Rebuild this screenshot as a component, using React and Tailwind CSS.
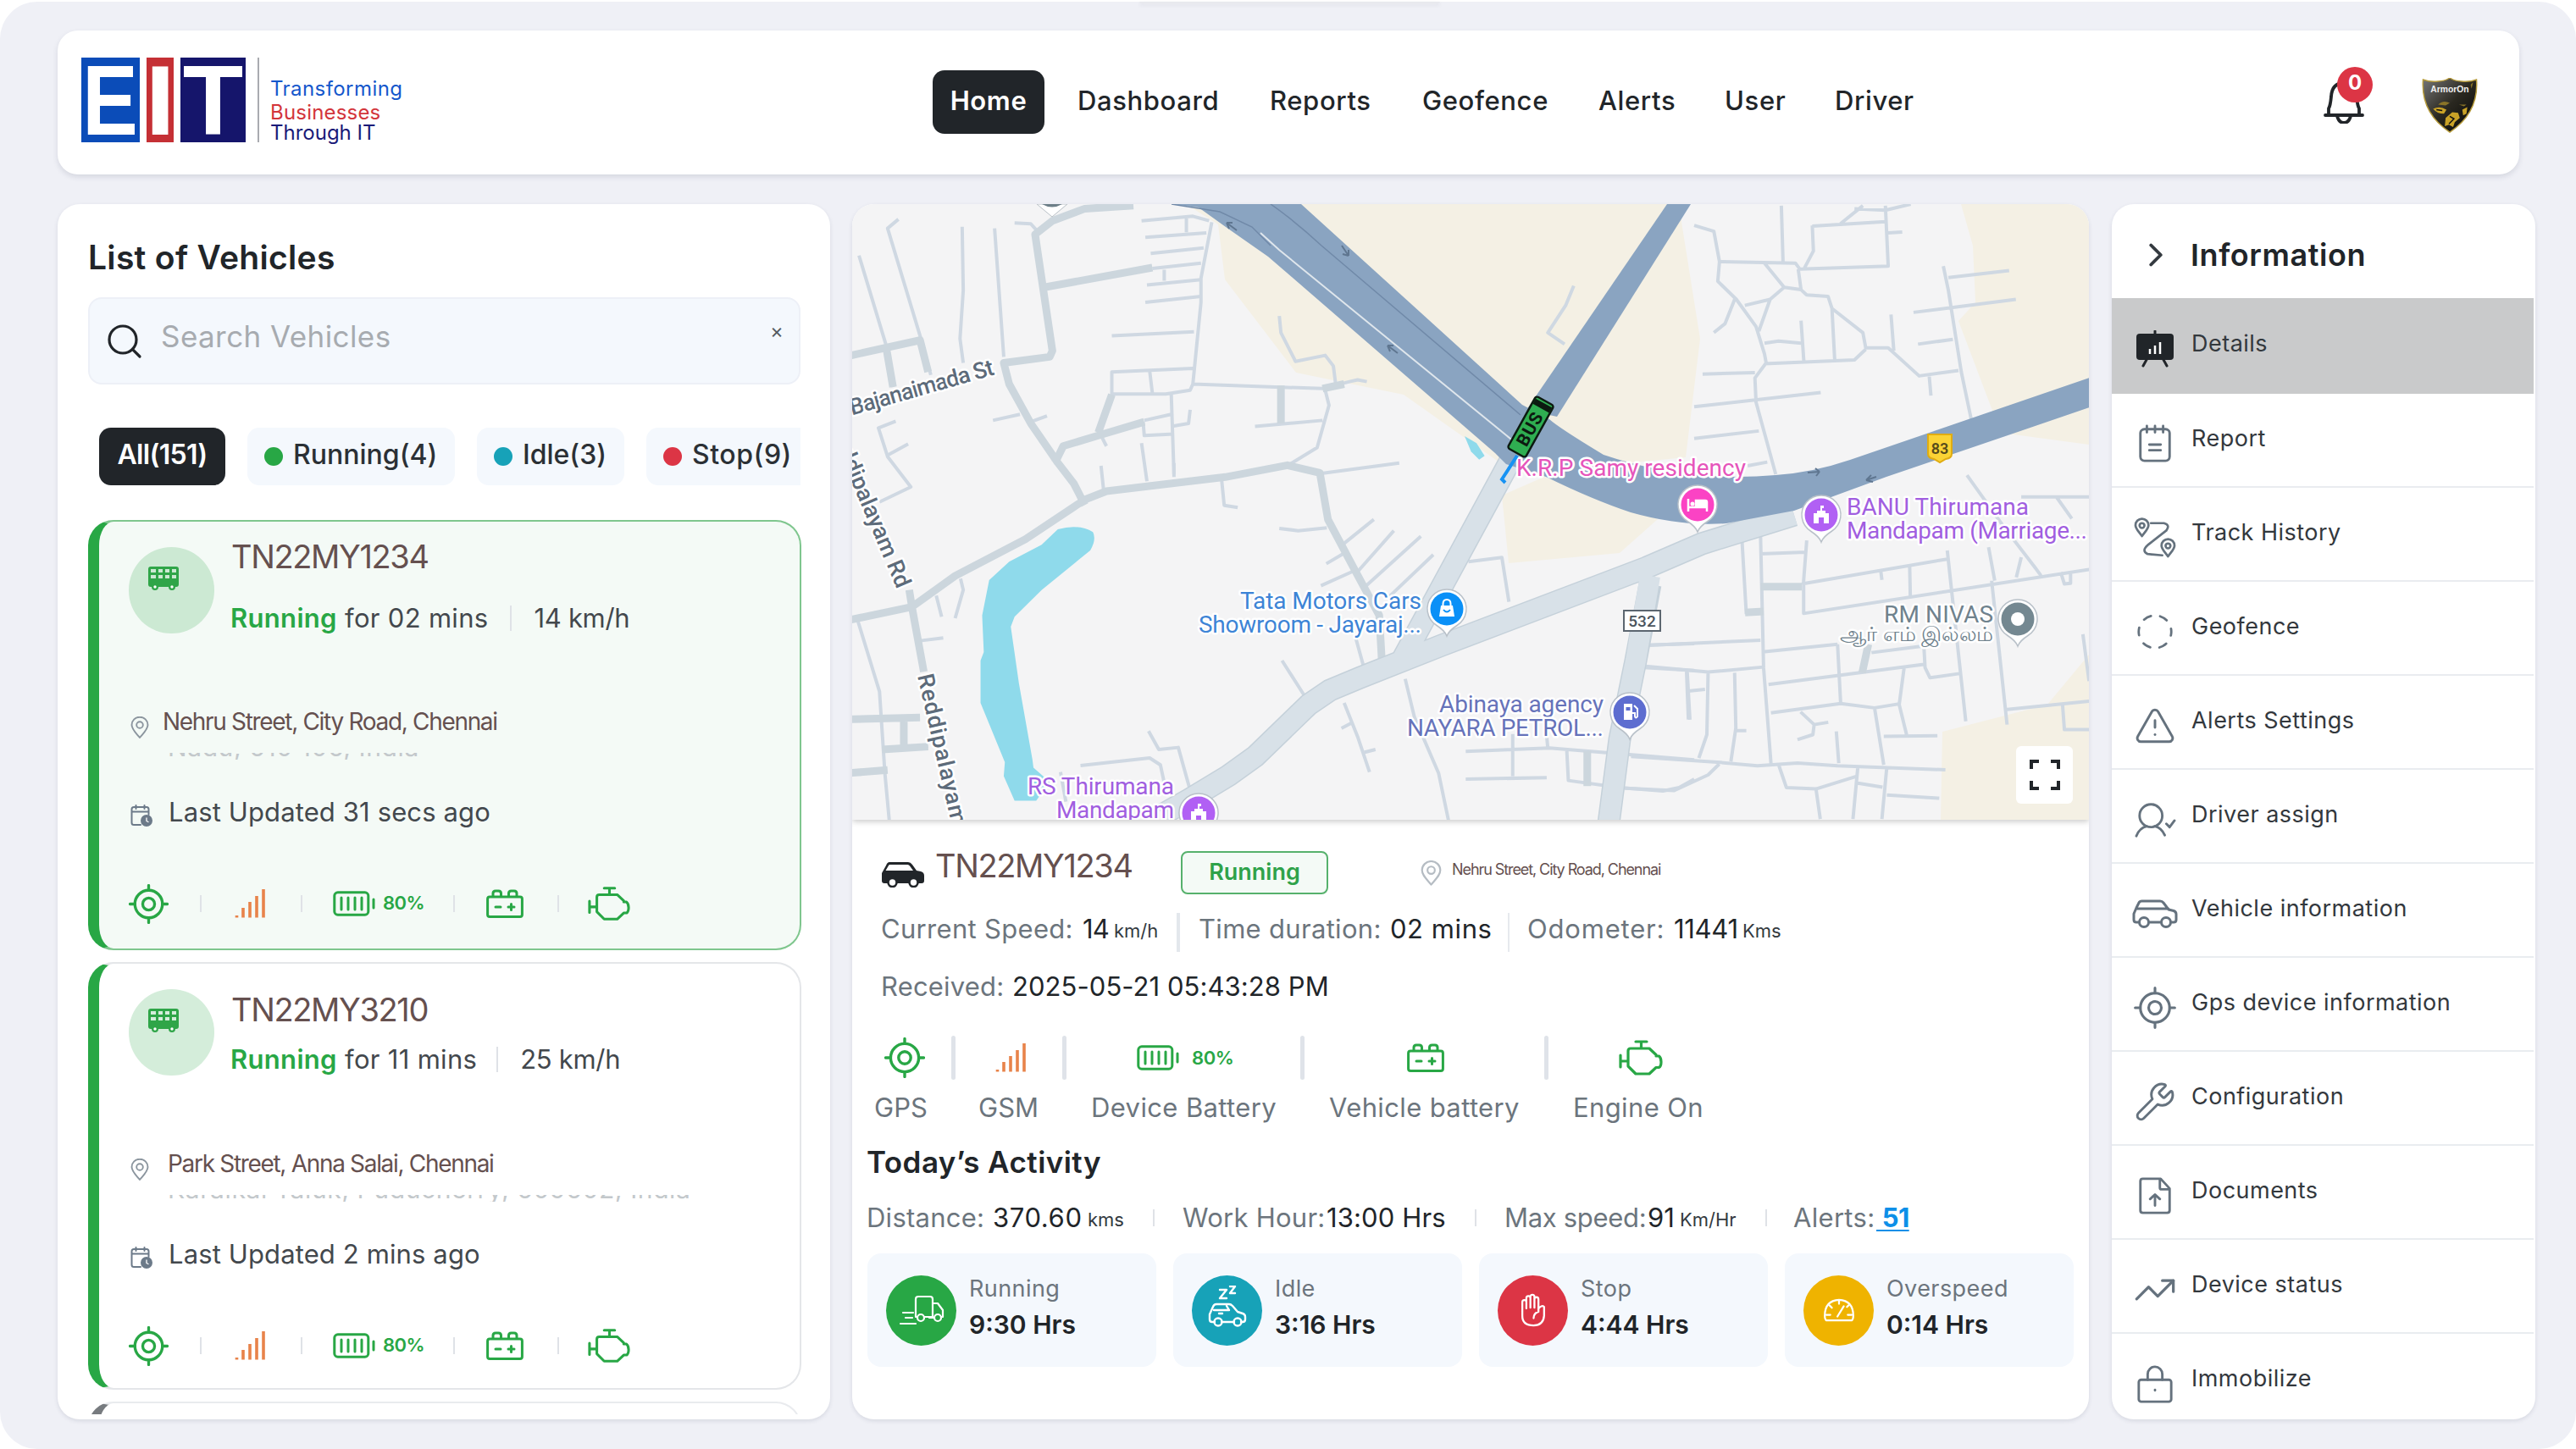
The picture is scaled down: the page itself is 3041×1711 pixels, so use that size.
import { TriangleAlert, Wrench, TrendingUp, ChevronRight, Search } from 'lucide-react';

/* ---------- icons ---------- */

function Icon({ className, sw = 1.5, box = '0 0 24 24', children }) {
  return (
    <svg
      viewBox={box}
      className={className}
      fill="none"
      stroke="currentColor"
      strokeWidth={sw}
      strokeLinecap="round"
      strokeLinejoin="round"
    >
      {children}
    </svg>
  );
}

const GpsIcon = ({ className, sw = 1.7 }) => (
  <Icon className={className} sw={sw}>
    <circle cx="12" cy="12" r="8.3" />
    <circle cx="12" cy="12" r="3.6" />
    <path d="M12 .8v2.9M12 20.3v2.9M.8 12h2.9M20.3 12h2.9" />
  </Icon>
);

const SignalIcon = ({ className }) => (
  <Icon className={className} sw={3.6} box="0 0 36 36">
    <path d="M2.5 34.500v-2.500M10 34.500V23M18 34.500V16M26 34.500V9M34 34.500V1" strokeLinecap="butt" />
  </Icon>
);

const BatteryIcon = ({ className }) => (
  <Icon className={className} sw={3} box="0 0 50 30">
    <rect x="1.8" y="1.8" width="40" height="26.4" rx="4" />
    <path d="M10 8v14M18 8v14M26 8v14M34 8v14M48 10v10" />
  </Icon>
);

const VehicleBatteryIcon = ({ className }) => (
  <Icon className={className} sw={3} box="0 0 44 34">
    <rect x="1.6" y="9" width="40.8" height="23.4" rx="2.5" />
    <path d="M8 8.500V5q0-3 3-3h3.500q3 0 3 3v3.500M26.500 8.500V5q0-3 3-3H33q3 0 3 3v3.500M11 21h6M26 21h7M29.500 17.500v7" />
  </Icon>
);

const EngineIcon = ({ className }) => (
  <Icon className={className} sw={3.2} box="0 0 52 42">
    <path d="M20 2h13M26.500 2v7.500M14 10h22l8 7.500V19h3.500q2.500 2 2.500 7t-2.500 6.500H44l-8 7.500H20l-9-9V13q0-3 3-3M2 18v14M2 25h9" />
  </Icon>
);

const BusIcon = ({ className }) => (
  <svg viewBox="0 0 36 28" className={className} fill="currentColor">
    <path
      fillRule="evenodd"
      d="M3 0h30a3 3 0 0 1 3 3v18a3 3 0 0 1-3 3h-1a4 4 0 0 1-8 0H12a4 4 0 0 1-8 0H3a3 3 0 0 1-3-3V3a3 3 0 0 1 3-3ZM3 3v4h6V3Zm9 0v4h5V3Zm8 0v4h5V3Zm8 0v4h5V3ZM3 10v4h6v-4Zm9 0v4h5v-4Zm8 0v4h5v-4Zm8 0v4h5v-4Z"
    />
    <circle cx="8" cy="24" r="1.700" fill="#fff" />
    <circle cx="28" cy="24" r="1.700" fill="#fff" />
  </svg>
);

const PinIcon = ({ className, sw = 1.9 }) => (
  <Icon className={className} sw={sw} box="0 0 22 26">
    <path d="M11 25C6 19 1.500 15 1.500 10a9.500 9.300 0 0 1 19 0c0 5-4.500 9-9.500 15Z" />
    <circle cx="11" cy="10" r="3.800" />
  </Icon>
);

const CalendarIcon = ({ className }) => (
  <Icon className={className} sw={2} box="0 0 26 26">
    <path d="M12 24H4q-2.500 0-2.500-2.500V5.500Q1.500 3 4 3h15q2.500 0 2.500 2.500V12M1.500 8.500h20M6.500 1v4M16.500 1v4" />
    <circle cx="19" cy="19" r="6" fill="currentColor" />
    <path d="M19 16v3.500l2 1" stroke="#fff" strokeWidth="1.300" />
  </Icon>
);

const SolidCarIcon = ({ className }) => (
  <svg viewBox="0 0 50 30" className={className}>
    <path d="M9 0h22q3 0 5 3l5 7 5 1q4 1 4 5v6q0 3-3 3H3q-3 0-3-3v-9l5-9Q6.500 0 9 0Z" fill="#212529" />
    <path d="M9.500 3h21q1.500 0 2.500 1.500L37 10H4.500L8 4q.5-1 1.500-1Z" fill="#fff" />
    <circle cx="12.500" cy="24" r="5" fill="#fff" stroke="#212529" strokeWidth="2.600" />
    <circle cx="37.500" cy="24" r="5" fill="#fff" stroke="#212529" strokeWidth="2.600" />
  </svg>
);

const BellIcon = ({ className }) => (
  <Icon className={className} sw={3.800} box="0 0 48 54">
    <path d="M2 44h44M6 43V36q2-3 3-14Q10 6 24 6t15 16q1 11 3 14v7M16 45q2 8 8 8t8-8" />
  </Icon>
);

function ShieldLogo({ className }) {
  return (
    <svg viewBox="0 0 66 66" className={className}>
      <defs>
        <linearGradient id="shield" x1="0" y1="0" x2="1" y2="1">
          <stop offset="0" stopColor="#777" />
          <stop offset=".5" stopColor="#2a2820" />
          <stop offset="1" stopColor="#050505" />
        </linearGradient>
      </defs>
      <path
        d="M1 2q8 3 18 2q8 0 14-4q6 4 14 4q10 1 18-2q3 40-32 63Q-2 42 1 2Z"
        fill="url(#shield)"
        stroke="#b59a3a"
        strokeWidth="1.500"
      />
      <text x="33" y="17" textAnchor="middle" fontSize="10.500" fontWeight="600" fill="#f0f0f0" fontFamily="Liberation Sans">
        ArmorOn
      </text>
      <path d="M13 37q8-4 16 1l-3 5q-8 0-13-6M48 38l6-3-1 8-4 2ZM28 48l8-7 7 1 2 6-6 5-2 6-5-3-5 2Z" fill="#c9a227" />
      <path d="M19 32q6-6 14-2l-5 3ZM58 8l3-3-2 8ZM44 32h9l-3 2Z" fill="#8a7428" />
      <path d="M33 46l5 3-6 6M17 38l7 1" stroke="#111" strokeWidth="1.500" fill="none" />
    </svg>
  );
}

const menu = [
  {
    label: 'Details',
    icon: (
      <svg viewBox="0 0 44 44" className="h-[44px] w-[44px]">
        <path d="M22 1v6M13 33l-5 9M31 33l5 9" stroke="#212529" strokeWidth="3" strokeLinecap="round" />
        <rect x="0" y="4" width="44" height="31" rx="4" fill="#212529" />
        <path d="M16 28v-6M22 28v-10M28 28v-14" stroke="#fff" strokeWidth="2.500" />
      </svg>
    ),
  },
  {
    label: 'Report',
    icon: (
      <Icon className="h-[46px] w-[46px]">
        <rect x="3" y="3" width="18" height="19.500" rx="2.500" />
        <path d="M7 1v4M12 1v4M17 1v4M8.500 12.500h7M8.500 16h7" />
      </Icon>
    ),
  },
  {
    label: 'Track History',
    icon: (
      <Icon className="h-[48px] w-[50px]" box="0 0 26 25" sw={1.400}>
        <path d="M5 11.500C3 8.500 1 7 1 4.800a4 4 0 0 1 8 0C9 7 7 8.500 5 11.500ZM21 24c-2-3-4-4.500-4-6.700a4 4 0 0 1 8 0c0 2.200-2 3.700-4 6.700Z" />
        <circle cx="5" cy="5" r="1.500" />
        <circle cx="21" cy="17.500" r="1.500" />
        <path d="M10.500 3.500h8q4 1 1.500 4.500L8.500 17q-4 3.500 0 5.500l9 .8" />
      </Icon>
    ),
  },
  {
    label: 'Geofence',
    icon: (
      <Icon className="h-[44px] w-[44px]" sw={1.500}>
        <circle cx="12" cy="12" r="10.500" strokeDasharray="5 6" strokeDashoffset="2.500" />
      </Icon>
    ),
  },
  { label: 'Alerts Settings', icon: <TriangleAlert className="h-[50px] w-[50px]" strokeWidth={1.400} /> },
  {
    label: 'Driver assign',
    icon: (
      <Icon className="h-[46px] w-[50px]" box="0 0 26 24">
        <circle cx="10.500" cy="9.500" r="7" />
        <path d="M1.500 22q2-5 6.500-6M19 21.500q-2-4.500-6-5.500M20 14.500l2 2 3-4" />
      </Icon>
    ),
  },
  {
    label: 'Vehicle information',
    icon: (
      <Icon className="h-[50px] w-[54px]" box="0 0 54 50" sw={3}>
        <path d="M8 35H5q-3 0-3-3v-7l3-7 3-6q1-2 3.500-2H33q2.500 0 4 2l6 8 6 1.500q3 1 3 4v6.500q0 3-3 3h-3M20 35h14M5 19h38" />
        <circle cx="14" cy="35" r="5.500" />
        <circle cx="40" cy="35" r="5.500" />
      </Icon>
    ),
  },
  { label: 'Gps device information', icon: <GpsIcon className="h-[50px] w-[50px]" sw={1.500} /> },
  { label: 'Configuration', icon: <Wrench className="h-[50px] w-[50px]" strokeWidth={1.400} /> },
  {
    label: 'Documents',
    icon: (
      <Icon className="h-[46px] w-[46px]">
        <path d="M15.500 1.500h-11Q3 1.500 3 3v18q0 1.500 1.500 1.500h15q1.500 0 1.500-1.500V7.500ZM15 2v5q0 1 1 1h4.500M12 18v-6.500M9 14l3-2.800 3 2.800" />
      </Icon>
    ),
  },
  { label: 'Device status', icon: <TrendingUp className="h-[52px] w-[52px]" strokeWidth={1.500} /> },
  {
    label: 'Immobilize',
    icon: (
      <Icon className="h-[46px] w-[46px]">
        <rect x="2" y="9.500" width="20" height="13.500" rx="1.500" />
        <path d="M7.500 9.500V6a4.500 4.500 0 0 1 9 0v3.500M12 15.800v.3" />
      </Icon>
    ),
  },
];

/* ---------- header ---------- */

const LogoTile = ({ className, children, textClass }) => (
  <span className={`flex h-[100px] items-center justify-center ${className}`}>
    <span className={`font-[Liberation_Sans] text-[117px] leading-none font-bold text-white ${textClass}`}>{children}</span>
  </span>
);

const navItems = [
  { label: 'Dashboard', cls: 'w-[227px]' },
  { label: 'Reports', cls: 'w-[180px]' },
  { label: 'Geofence', cls: 'w-[208px]' },
  { label: 'Alerts', cls: 'w-[149px]' },
  { label: 'User', cls: 'w-[130px]' },
  { label: 'Driver', cls: 'w-[92px]' },
];

function Header() {
  return (
    <header className="flex h-[170px] w-[2906px] items-start rounded-[24px] bg-white shadow-[0_3px_6px_rgba(40,50,80,0.13)]">
      <div className="mt-[32px] ml-[28px] flex w-[1005px] items-start">
        <LogoTile className="w-[69px] bg-[#0b4cb8]" textClass="scale-x-[0.84]">E</LogoTile>
        <LogoTile className="ml-[8px] w-[32px] bg-[#c53035]" textClass="scale-x-[1.1]">I</LogoTile>
        <LogoTile className="ml-[8px] w-[77px] bg-[#15156b]" textClass="">T</LogoTile>
        <span className="ml-[14px] h-[100px] w-[2px] bg-[#a9abb0]" />
        <div className="mt-[23px] ml-[13px] flex flex-col text-[24px] leading-[27px]">
          <span className="mb-px tracking-[0.018em] text-[#1557cc]">Transforming</span>
          <span className="tracking-[0.008em] text-[#d3353b]">Businesses</span>
          <span className="-mt-[3px] text-[#1a1a78]">Through IT</span>
        </div>
      </div>
      <nav className="mt-[47px] flex h-[75px] items-center text-[31px] font-medium tracking-[0.02em] text-[#212529]">
        <a className="mr-[39px] flex h-[75px] w-[132px] items-center justify-center rounded-[14px] bg-[#212529] pb-[3px] font-semibold text-white">
          Home
        </a>
        {navItems.map((n) => (
          <a key={n.label} className={`pb-[3px] whitespace-nowrap ${n.cls}`}>{n.label}</a>
        ))}
      </nav>
      <div className="relative mt-[51px] ml-[485px] h-[64px] w-[58px]">
        <BellIcon className="mt-[5px] h-[54px] w-[48px] text-[#212529]" />
        <span className="absolute top-[-8px] left-[16px] flex h-[42px] w-[42px] items-center justify-center rounded-full bg-[#dc3545] pb-1 text-[24px] font-bold text-white">
          0
        </span>
      </div>
      <ShieldLogo className="mt-[56px] ml-[58px] h-[65px] w-[66px]" />
    </header>
  );
}

/* ---------- vehicle list ---------- */

const Rule = ({ className }) => <span className={`w-[2px] bg-[#dfe2e7] ${className}`} />;

const chips = [
  { label: 'Running(4)', w: 'w-[245px] pl-[20px]', dot: 'bg-[#28a745]' },
  { label: 'Idle(3)', w: 'w-[174px] pl-[20px]', dot: 'bg-[#17a2b8]' },
  { label: 'Stop(9)', w: 'w-[200px] pl-[20px] tracking-[0.017em]', dot: 'bg-[#dc3545]' },
];

function VehicleCard({ v }) {
  return (
    <article
      className={`flex shrink-0 flex-col rounded-[30px] border-2 border-l-[13px] border-l-[#28a745] pl-[35px] ${v.card}`}
    >
      <div className="flex h-[134px]">
        <div className={`mt-[30px] h-[102px] w-[101px] rounded-full pt-[23px] pl-[23px] text-[#2fa548] ${v.halo}`}>
          <BusIcon className="h-[28px] w-[36px]" />
        </div>
        <div className={`ml-[20px] flex flex-col ${v.offset}`}>
          <span className="text-[38px] leading-[48px] tracking-[-0.036em] text-[#65504f]">{v.plate}</span>
          <div className={`flex h-[40px] items-center text-[31px] text-[#43484d] ${v.statusGap}`}>
            <span className="-ml-px w-[135px] font-semibold tracking-[0.01em] text-[#28a745]">Running</span>
            <span className="tracking-[0.01em]">{v.since}</span>
            <Rule className={`h-[30px] ${v.ruleGap}`} />
            <span className="tracking-[-0.01em]">{v.speed}</span>
          </div>
        </div>
      </div>
      <div className="mt-[82px] flex h-[40px] items-start text-[28px] leading-[40px] tracking-[-0.047em] text-[#65504f]">
        <PinIcon className="mt-[14px] ml-[2px] h-[26px] w-[22px] text-[#8b959e]" />
        <span className={v.addressGap}>{v.address}</span>
      </div>
      <div className="mt-[17px] ml-[46px] h-[8px] overflow-hidden">
        <div className="-mt-[22px] text-[30px] leading-[30px] whitespace-nowrap tracking-[0.02em] text-[#c3c8cb]">
          {v.region}
        </div>
      </div>
      <div className="mt-[42px] flex h-[40px] items-center text-[31px] text-[#43484d]">
        <CalendarIcon className="mt-[8px] ml-[2px] h-[26px] w-[26px] text-[#6c7a89]" />
        <span className="ml-[19px] tracking-[0.004em]">{v.updated}</span>
      </div>
      <div className="mt-[63px] flex h-[50px] items-center text-[#28a745]">
        <GpsIcon className="h-[47px] w-[47px]" />
        <Rule className="ml-[37px] h-[20px]" />
        <SignalIcon className="ml-[39px] h-[36px] w-[36px] text-[#e8834a]" />
        <Rule className="ml-[42px] h-[20px]" />
        <BatteryIcon className="ml-[36px] h-[30px] w-[50px]" />
        <span className="ml-[9px] w-[49px] pb-[2px] text-[22px] font-semibold tracking-[-0.026em]">80%</span>
        <Rule className="ml-[34px] h-[20px]" />
        <VehicleBatteryIcon className="ml-[37px] h-[34px] w-[44px]" />
        <Rule className="ml-[40px] h-[20px]" />
        <EngineIcon className="ml-[34px] h-[42px] w-[50px]" />
      </div>
    </article>
  );
}

const vehicles = [
  {
    plate: 'TN22MY1234',
    since: 'for 02 mins',
    speed: '14 km/h',
    address: 'Nehru Street, City Road, Chennai',
    region: 'Nadu, 610 106, India',
    updated: 'Last Updated 31 secs ago',
    card: 'h-[508px] border-[#7fc68e] bg-[#f4faf6]',
    halo: 'bg-[#cce9d3]',
    offset: 'mt-[17px]',
    statusGap: 'mt-[29px]',
    ruleGap: 'mx-[26px]',
    addressGap: 'ml-[16px]',
  },
  {
    plate: 'TN22MY3210',
    since: 'for 11 mins',
    speed: '25 km/h',
    address: 'Park Street, Anna Salai, Chennai',
    region: 'Karaikal Taluk, Puducherry, 609602, India',
    updated: 'Last Updated 2 mins ago',
    card: 'h-[505px] border-[#e4e6e9] bg-white',
    halo: 'bg-[#d4edda]',
    offset: 'mt-[30px]',
    statusGap: 'mt-[15px]',
    ruleGap: 'mr-[26px] ml-[23px]',
    addressGap: 'ml-[22px]',
  },
];

function VehicleList() {
  return (
    <section className="flex h-[1435px] w-[912px] flex-col rounded-[26px] bg-white pl-[36px] shadow-[0_2px_5px_rgba(40,50,80,0.12)]">
      <h2 className="flex h-[110px] items-center pt-[16px] text-[39px] font-semibold tracking-[0.008em] text-[#212529]">
        List of Vehicles
      </h2>
      <div className="flex h-[103px] w-[841px] items-center rounded-[16px] border-2 border-[#edf0f7] bg-[#f4f8fd]">
        <Search className="ml-[17px] h-[48px] w-[48px] text-[#212529]" strokeWidth={1.600} />
        <span className="ml-[19px] flex-1 pb-[10px] text-[35px] tracking-[0.012em] text-[#a7abb0]">Search Vehicles</span>
        <span className="mr-[18px] pb-[24px] text-[24px] text-[#555b61]">×</span>
      </div>
      <div className="mt-[51px] flex h-[68px] w-[841px] overflow-hidden pl-[13px] text-[32px] font-medium text-[#2b3035]">
        <span className="mr-[26px] flex w-[149px] shrink-0 items-center justify-center rounded-[14px] bg-[#212529] pb-[5px] font-semibold tracking-[-0.021em] text-white">
          All(151)
        </span>
        {chips.map((c) => (
          <span key={c.label} className={`mr-[26px] flex shrink-0 items-center rounded-[14px] bg-[#f4f8fd] pb-[5px] ${c.w}`}>
            <span className={`mt-[4px] mr-[12px] h-[22px] w-[22px] rounded-full ${c.dot}`} />
            {c.label}
          </span>
        ))}
      </div>
      <div className="mt-[41px] flex h-[1056px] w-[842px] flex-col gap-[14px] overflow-hidden">
        {vehicles.map((v) => (
          <VehicleCard key={v.plate} v={v} />
        ))}
        <div className="h-[505px] shrink-0 rounded-[30px] border-2 border-l-[13px] border-[#e9ebee] border-l-[#777b7f] bg-white" />
      </div>
    </section>
  );
}

/* ---------- map ---------- */

const halo = { paintOrder: 'stroke', stroke: '#fff', strokeWidth: 5, strokeLinejoin: 'round' };

function MapPin({ x, y, color, children }) {
  return (
    <g transform={`translate(${x} ${y})`}>
      <path d="M0 32Q-2 26-12 19.500A23 23 0 1 1 12 19.500Q2 26 0 32Z" fill="#fff" stroke="#b9c1c9" strokeWidth="1.500" />
      <circle r="19.500" fill={color} />
      {children}
    </g>
  );
}

function CityMap() {
  return (
    <svg viewBox="1006 241 1460 727" className="block h-[727px] w-[1460px]">
      <rect x="1006" y="241" width="1460" height="727" fill="#f4f4f5" />
      <g fill="#f4f0e4">
        <path d="M1438 265L1446 330L1530 440L1657 466L1790 560L1990 540L2007 400L1985 262V241H1400Z" />
        <path d="M1773 585L1830 560L1957 613L1912 653L1781 665Z" />
        <path d="M2315 241L2329 290L2332 357L2312 379L2362 511L2466 525V241Z" />
        <path d="M2466 773L2417 832L2293 864L2291 968H2466Z" />
      </g>

      {/* side streets */}
      <g fill="none" stroke="#cfd8e2" strokeWidth="4" strokeLinejoin="round">
        <g transform="matrix(.6378 0 0 .3571 1000 0)">
          <path
            vectorEffect="non-scaling-stroke"
            d="M95 725L75 755L135 1110L155 1240M22 845L72 1140L85 1280M213 750L215 960L209 1120L215 1200M273 755L290 1180M310 737L340 740L350 760M675 735L655 920V1000L640 1270L635 1290L590 1303H490M545 730L640 715L670 730M552 785L665 770M628 722V768M562 838L660 820M565 888L655 870M587 892V928M555 942L655 925M552 1000L655 980M490 1110L642 1097M490 1305V1230L640 1218M560 1225L565 1300M640 1270L880 1285L930 1262L945 1256L962 1262M490 1305L465 1420M600 1303L605 1568M755 1410L880 1390M885 1290L892 1340L870 1480L815 1540M905 1280L900 1210L885 1175L830 1195L803 1100L800 1045M550 1390L600 1370M548 1395L550 1440L605 1435M635 1355L632 1400L600 1410M270 1390L320 1370M340 1395L370 1375M470 1440L480 1475M90 1393L58 1415L75 1510L118 1610L60 1660M75 1505L113 1468M1345 945L1330 1010L1297 1100L1328 1138"
          />
        </g>
        <g transform="matrix(.6639 0 0 .3571 2000 0)">
          <path
            vectorEffect="non-scaling-stroke"
            d="M155 680L158 865M0 745L35 765L45 865L180 870L188 890L345 880L340 680M45 865L42 930L75 990L110 1080L125 1170L128 1200L108 1250L110 1330L145 1568M210 745L212 830L195 890M210 748L340 733M260 740L300 680M285 690L340 695L385 675M345 770L370 767M125 870L160 950L190 958L185 890M160 950L135 990L90 1010M135 990L115 1095M72 990L55 1070L35 1100M190 958L200 975L238 980L245 1020L300 1100L305 1150L345 1150L400 1243L470 1225M305 1155L285 1190L125 1203M245 1020L250 1195M190 1060L195 1195M125 1135L150 1128L190 1135M350 1040L355 1160M418 1245L421 1308M15 1237L108 1232M0 1345L225 1298M0 1450L115 1425M95 1540L130 1528M443 880L452 960L475 1230L493 1390M452 918L560 895M390 1033L572 990M398 1138L460 1122"
          />
        </g>
        <g transform="matrix(.6378 0 0 .3333 1000 480)">
          <path
            vectorEffect="non-scaling-stroke"
            d="M875 238L1022 200M693 255L698 350L723 358M800 432L835 440L888 430M920 485L975 400M920 520L887 557M945 585L1012 440M935 585L877 635M958 640L1062 460M1000 680L1085 525M1150 550L1212 535L1225 692M605 200V250M470 210L475 300M545 130L555 265M20 760L60 1010L70 1300L78 1465M210 610L215 650L200 750M165 670L175 745M135 830L178 820M65 1215L150 1205M805 900L850 1035M940 810L958 935M920 1050L945 1170L967 1295M915 1140L935 1120M958 1225L978 1215M1033 965L1050 1100L1095 1300L1113 1465M558 1150L577 1215L613 1208L635 1360M432 1272L560 1245L580 1270L590 1360M395 1295L405 1400M1145 1222L1300 1210L1568 1252M1232 1160V1310M1145 1320L1295 1315M1295 1170L1297 1210M1332 1215L1335 1325L1430 1350L1510 1362L1540 1350L1568 1320M1480 845L1568 840M1475 925L1568 935M1555 940L1560 1110"
          />
        </g>
        <g transform="matrix(.7277 0 0 .3954 1900 480)">
          <path
            vectorEffect="non-scaling-stroke"
            d="M215 400L222 620M245 380L250 780L262 1065M245 440L318 435M320 400L315 520V618L778 487M312 530L550 455M487 475L488 565M440 490L442 518M548 430L578 940M620 520L645 950M615 420L625 520M580 205L640 360L690 480L700 505M668 270H778M725 270L750 335M668 450L660 510M62 713L245 698M55 775L160 793L250 778M252 732L370 710M258 830L510 770M370 710L375 885M425 735L510 715L512 780L520 810L570 797M478 780L470 890L482 980M262 915L375 887L430 900L470 888M310 912L332 950L355 943M332 950L330 980L305 995M368 970L372 1065M430 900L445 1070M445 985L532 983M125 790L128 935M128 850L155 845M160 795L158 980L145 1050M203 795L205 960L197 1060M205 968H222M35 1045L180 1063L240 1073L305 1065L370 1073L545 1085M25 1140L105 1147L160 1100L178 1068M275 1073L287 1138L335 1142L342 1232M335 1142L400 1105M403 1075L395 1232M403 1125L443 1137M450 1075L442 1232M450 1160L535 1170M645 905L778 880M735 890L738 965H778M768 680L778 820M732 495L738 530L748 528V495"
          />
        </g>
      </g>

      {/* collector streets */}
      <g fill="none" stroke="#ccd6dd" strokeWidth="9" strokeLinejoin="round">
        <g transform="matrix(.6378 0 0 .3571 1000 0)">
          <path
            vectorEffect="non-scaling-stroke"
            d="M8 1175L135 1125L150 1230M72 1145L85 1280M530 680L440 690L380 730L348 775L355 860L380 1160L375 1180L290 1200L300 1270L340 1400L390 1530L420 1600L440 1670M365 950L565 885M803 1275V1400M385 1530L400 1475L465 1440L550 1395M465 1430L490 1305M880 1285L920 1270"
          />
        </g>
        <g transform="matrix(.6378 0 0 .3333 1000 480)">
          <path
            vectorEffect="non-scaling-stroke"
            d="M8 755L120 710L200 600L330 470L440 330L480 300L700 250L815 208L875 235L890 400L940 580L985 740L990 910M115 650L120 710L142 940M8 1108L135 1102M105 1105V1210M65 1215L150 1205M8 1298L75 1288M1370 1220V1345"
          />
        </g>
        <g transform="matrix(.7277 0 0 .3954 1900 480)">
          <path vectorEffect="non-scaling-stroke" d="M245 538H312M420 710L410 795M220 615L250 612" />
        </g>
      </g>

      {/* water */}
      <g transform="matrix(.6378 0 0 .3333 1000 480)" fill="#8fdaeb">
        <path d="M390 435Q430 415 455 445Q462 470 450 510L360 650L310 745L303 780L318 980L343 1250L345 1280L375 1330L350 1397H310L290 1310L292 1260L247 1050V900L253 870L250 740L263 615L300 550L360 490Z" />
        <path d="M1143 105L1165 130L1180 175L1170 188L1155 160Z" />
      </g>

      {/* arterial roads */}
      <g fill="none" strokeLinejoin="round">
        <path
          d="M1785 540L1652 785M1372 962L1402 945L1450 916L1482 893L1545 832L1570 815L1606 800L1702 762L1944 670L2009 642L2118 608M1948 690L1931 780L1912 873L1898 980"
          stroke="#c5d1da"
          strokeWidth="27"
        />
        <path
          d="M1785 540L1652 785M1372 962L1402 945L1450 916L1482 893L1545 832L1570 815L1606 800L1702 762L1944 670L2009 642L2118 608M1948 680L1931 780L1912 873L1898 980"
          stroke="#d8e1e8"
          strokeWidth="24"
        />
      </g>

      {/* highway */}
      <g fill="#8aa4c1">
        <path d="M1968 241H1996L1838 492L1802 484Z" />
        <path d="M1383 241L1415 245L1447 268L1497 303L1765 535L1778 548L1825 563Q1880 590 1925 605Q1985 622 2038 618L2118 603L2227 563L2467 481V446L2184 543Q2140 558 2096 561Q1990 570 1893 537Q1840 505 1829 495L1797 478L1536 241Z" />
      </g>
      <path d="M1383 241L1440 250L1478 268L1500 290M1500 241Q1530 262 1560 290L1795 490" fill="none" stroke="#7089a8" strokeWidth="1.500" />
      <path d="M1488 275L1510 295L1788 522" fill="none" stroke="#dfe6ec" strokeWidth="2" />
      <g stroke="#5f7690" strokeWidth="2" fill="none">
        <path d="M1448 263l12 9m-12-9l3 7m-3-7l7 0M1584 290l8 12m0 0v-7m0 7l-7-2M1638 408l12 9m-12-9l3 7m-3-7l7 0M2134 558l14-1m0 0l-5-4m5 4l-4 5M2203 567l12-4m-12 4l6-6m-6 6l8 2" />
      </g>

      {/* road labels */}
      <g fontFamily="Roboto, sans-serif" fontSize="27" fill="#5d6b7a" fontWeight="500">
        <text transform="translate(1175 442) rotate(-16)" textAnchor="end" textLength="176" style={halo}>Bajanaimada St</text>
        <text transform="translate(1059 696) rotate(67)" textAnchor="end" style={halo}>Reddipalayam Rd</text>
        <text transform="translate(1083 798) rotate(77)" letterSpacing="1" style={halo}>Reddipalayam Rd</text>
      </g>

      {/* places */}
      <path d="M1224 241L1242 256L1260 241Z" fill="#fff" stroke="#b9c0c6" />
      <path d="M1230 241Q1242 248 1254 241Z" fill="#6d7f88" />
      <g fontFamily="Roboto, 'Noto Sans', sans-serif" fontSize="28" fontWeight="450">
        <g fill="#3d84d6" textAnchor="end">
          <text x="1678" y="719" textLength="214" style={halo}>Tata Motors Cars</text>
          <text x="1678" y="747" textLength="263" style={halo}>Showroom - Jayaraj...</text>
        </g>
        <MapPin x={1708} y={719} color="#0a90f7">
          <path d="M-9 9L-7 -4H7L9 9Z" fill="#fff" />
          <path d="M-4.500 -4V-6q0-5 4.500-5t4.500 5v2" fill="none" stroke="#fff" strokeWidth="2" />
          <path d="M-4 1q4 5 8 0" fill="none" stroke="#0a90f7" strokeWidth="2" />
        </MapPin>
        <g fill="#6673ba" textAnchor="end">
          <text x="1893" y="841" textLength="194" style={halo}>Abinaya agency</text>
          <text x="1893" y="869" textLength="232" style={halo}>NAYARA PETROL...</text>
        </g>
        <MapPin x={1924} y={841} color="#5d6dd0">
          <path d="M-7 -10H3V9H-7Z" fill="#fff" />
          <path d="M-4.500 -6h5v4h-5Z" fill="#5d6dd0" />
          <path d="M5 -8l4 4v9q-2 3-3 0v-4H3" fill="none" stroke="#fff" strokeWidth="2" />
        </MapPin>
        <g fill="#a15ee0" textAnchor="end">
          <text x="1386" y="938" textLength="173" style={halo}>RS Thirumana</text>
          <text x="1386" y="966" textLength="139" style={halo}>Mandapam</text>
        </g>
        <MapPin x={1415} y={960} color="#b160f4">
          <path d="M-9 10V-2h4v-3H5v3h4v12H3V3H-3v7ZM-1 -11h4v3H1v3h-2Z" fill="#fff" />
        </MapPin>
        <text x="1790" y="562" fill="#e655bb" textLength="271" style={halo}>K.R.P Samy residency</text>
        <MapPin x={2004} y={596} color="#fb43c4">
          <path d="M-11 -7V8M-11 3H11V8M11 3V-3q0-2-2-2H-2v8" fill="none" stroke="#fff" strokeWidth="2.500" />
          <path d="M-2 -5H9q2 0 2 3v5H-2Z" fill="#fff" />
          <circle cx="-6" cy="-1" r="2.500" fill="#fff" />
        </MapPin>
        <MapPin x={2150} y={608} color="#b160f4">
          <path d="M-9 10V-2h4v-3H5v3h4v12H3V3H-3v7ZM-1 -11h4v3H1v3h-2Z" fill="#fff" />
        </MapPin>
        <g fill="#a15ee0">
          <text x="2180" y="608" textLength="215" style={halo}>BANU Thirumana</text>
          <text x="2180" y="636" textLength="284" style={halo}>Mandapam (Marriage...</text>
        </g>
        <g fill="#6f828d" textAnchor="end">
          <text x="2353" y="735" textLength="129" style={halo}>RM NIVAS</text>
          <text x="2353" y="757" fontSize="24" fontWeight="500" textLength="181" lengthAdjust="spacingAndGlyphs" style={halo}>ஆர் எம் இல்லம்</text>
        </g>
        <MapPin x={2382} y={731} color="#748891">
          <circle r="8" fill="#fff" />
        </MapPin>
      </g>

      {/* route shields */}
      <rect x="1917" y="721" width="43" height="24" fill="#fff" stroke="#5c6670" strokeWidth="2" />
      <text x="1938.500" y="740" textAnchor="middle" fontFamily="Roboto" fontSize="19" fontWeight="500" fill="#4b545c">532</text>
      <path d="M2276 513H2304V536Q2304 541 2297 542L2290 546L2283 542Q2276 541 2276 536Z" fill="#fbd335" stroke="#e0ac12" strokeWidth="2" />
      <text x="2290" y="536" textAnchor="middle" fontFamily="Roboto" fontSize="18" fontWeight="600" fill="#564a1b">83</text>

      {/* tracked vehicle */}
      <path d="M1791 538L1773 566L1777 570" fill="none" stroke="#1792f3" strokeWidth="4" />
      <g transform="translate(1807 504) rotate(-61)">
        <rect x="-35" y="-12" width="70" height="24" rx="3" fill="#2fae51" stroke="#0c1a10" strokeWidth="2.500" />
        <path d="M25 -11H32V11H25Z" fill="#0c1a10" />
        <text x="-24" y="7.500" fontFamily="Roboto" fontWeight="700" fontSize="21" fill="#0c1a10" textLength="42">BUS</text>
      </g>
    </svg>
  );
}

/* ---------- vehicle details ---------- */

const K = ({ className, children }) => (
  <span className={`shrink-0 whitespace-nowrap text-[#6c757d] ${className}`}>{children}</span>
);
const V = ({ className, children }) => (
  <span className={`shrink-0 whitespace-nowrap text-[#212529] ${className}`}>{children}</span>
);
const Unit = ({ className, children }) => (
  <span className={`shrink-0 pt-[4px] text-[22px] tracking-normal whitespace-nowrap text-[#343a40] ${className}`}>{children}</span>
);

const tiles = [
  {
    label: 'Running',
    value: '9:30 Hrs',
    bg: 'bg-[#28a745]',
    icon: (
      <Icon className="h-[44px] w-[54px]" box="0 0 54 44" sw={2.200}>
        <path d="M22 30h-2V9q0-3 3-3h14q3 0 3 3v21H31M40 14h6l6 8v8h-2" />
        <circle cx="26" cy="31" r="4" />
        <circle cx="46" cy="31" r="4" />
        <path d="M5 25h12M8 31h8M2 38h18M36 31h6" />
      </Icon>
    ),
  },
  {
    label: 'Idle',
    value: '3:16 Hrs',
    bg: 'bg-[#17a2b8]',
    icon: (
      <Icon className="mb-[8px] h-[50px] w-[48px]" box="0 0 48 50" sw={2.400}>
        <path d="M15 5h8l-8 10h8M27 1h6l-6 8h6" />
        <path d="M9 43H6q-3 0-3-3v-6l4-9q1-3 4-3h15q2 0 4 2l6 7 6 2q3 1 3 4v3q0 3-3 3h-2M17 43h15M8 29h18l-3-5M14 33h4" />
        <circle cx="13" cy="43" r="4.500" />
        <circle cx="36" cy="43" r="4.500" />
      </Icon>
    ),
  },
  {
    label: 'Stop',
    value: '4:44 Hrs',
    bg: 'bg-[#dc3545]',
    icon: (
      <Icon className="h-[40px] w-[31px]" box="0 0 32 42" sw={2.400}>
        <path d="M3 24V11q0-2.500 2.500-2.500T8 11v8M8 19V6q0-2.500 2.500-2.500T13 6v12M13 18V4.500Q13 2 15.500 2T18 4.500V18M18 18V7.500Q18 5 20.500 5T23 7.500V19q5-5 7-2v11q-1 12-13 12Q3 40 3 28V20M23 19v4q-6 2-6 8" />
      </Icon>
    ),
  },
  {
    label: 'Overspeed',
    value: '0:14 Hrs',
    bg: 'bg-[#efb300]',
    icon: (
      <Icon className="h-[28px] w-[38px]" box="0 0 40 30" sw={2.400}>
        <path d="M4 28Q2 27 2 22Q2 3 20 2Q38 3 38 22q0 5-2 6ZM18 23l8-13M20 3v4M9 21H4M36 21h-5M8 9l3 3M32 9l-2 2" />
      </Icon>
    ),
  },
];

const CenterRule = ({ className }) => <span className={`h-[52px] w-[5px] rounded-full bg-[#dfe3e9] ${className}`} />;

function VehicleDetails() {
  return (
    <section className="flex h-[1435px] w-[1460px] flex-col overflow-hidden rounded-[26px] bg-white shadow-[0_2px_5px_rgba(40,50,80,0.12)]">
      <div className="relative h-[727px] shrink-0 shadow-[0_2px_7px_rgba(0,0,0,0.22)]">
        <CityMap />
        <button className="absolute right-[19px] bottom-[19px] flex h-[68px] w-[67px] items-center justify-center rounded-[6px] bg-white">
          <svg viewBox="0 0 36 36" className="h-[36px] w-[36px]" fill="none" stroke="#212529" strokeWidth="4">
            <path d="M2 11V2h9M25 2h9v9M34 25v9h-9M11 34H2v-9" />
          </svg>
        </button>
      </div>

      <div className="mt-[37px] flex h-[51px] items-center pl-[35px]">
        <SolidCarIcon className="mt-[4px] h-[30px] w-[50px]" />
        <span className="mb-[17px] ml-[13px] w-[290px] text-[38px] leading-[48px] tracking-[-0.036em] text-[#65504f]">TN22MY1234</span>
        <span className="flex h-[51px] w-[174px] items-center justify-center rounded-[8px] border-2 border-[#56b16c] bg-[#f4faf6] text-[27px] font-semibold text-[#2fa24a]">
          Running
        </span>
        <PinIcon className="ml-[109px] h-[30px] w-[25px] text-[#b5bcc3]" />
        <span className="ml-[12px] pb-[8px] text-[18px] tracking-[-0.06em] text-[#65504f]">Nehru Street, City Road, Chennai</span>
      </div>

      <div className="mt-[21px] flex h-[40px] items-center pl-[34px] text-[31px] tracking-[0.01em]">
        <K className="w-[238px]">Current Speed:</K>
        <V className="w-[37px] tracking-[-0.03em]">14</V>
        <Unit className="w-[74px]">km/h</Unit>
        <span className="mt-[8px] h-[46px] w-[4px] shrink-0 bg-[#e3e7ec]" />
        <K className="ml-[22px] w-[226px]">Time duration:</K>
        <V className="w-[139px] tracking-[0.018em]">02 mins</V>
        <span className="mt-[8px] h-[46px] w-[2px] shrink-0 bg-[#e6e9ee]" />
        <K className="ml-[21px] w-[173px] tracking-[0.026em]">Odometer:</K>
        <V className="w-[81px] tracking-[-0.01em]">11441</V>
        <Unit>Kms</Unit>
      </div>

      <div className="mt-[28px] flex h-[40px] items-center pl-[34px] text-[31px]">
        <K className="w-[155px] tracking-[0.006em]">Received:</K>
        <V className="tracking-[0.002em]">2025-05-21 05:43:28 PM</V>
      </div>

      <div className="mt-[38px] flex h-[52px] items-center pl-[38px] text-[#28a745]">
        <GpsIcon className="h-[48px] w-[48px]" />
        <CenterRule className="ml-[31px]" />
        <SignalIcon className="ml-[47px] h-[36px] w-[36px] text-[#e8834a]" />
        <CenterRule className="ml-[43px]" />
        <BatteryIcon className="ml-[83px] h-[30px] w-[50px]" />
        <span className="ml-[15px] w-[49px] text-[22px] font-semibold tracking-[-0.02em]">80%</span>
        <CenterRule className="ml-[79px]" />
        <VehicleBatteryIcon className="ml-[121px] h-[34px] w-[44px]" />
        <CenterRule className="ml-[118px]" />
        <EngineIcon className="ml-[83px] h-[42px] w-[52px]" />
      </div>

      <div className="mt-[13px] flex h-[40px] items-center pl-[26px] text-[31px] tracking-[0.012em]">
        <K className="w-[123px] tracking-normal">GPS</K>
        <K className="w-[133px] tracking-normal">GSM</K>
        <K className="w-[281px]">Device Battery</K>
        <K className="w-[288px]">Vehicle battery</K>
        <K>Engine On</K>
      </div>

      <h3 className="mt-[24px] flex h-[40px] items-center pl-[17px] text-[35px] font-semibold tracking-[0.013em] text-[#212529]">
        Today’s Activity
      </h3>

      <div className="mt-[26px] flex h-[40px] items-center pl-[17px] text-[31px]">
        <K className="w-[149px] tracking-[0.008em]">Distance:</K>
        <V className="w-[112px] tracking-[0.02em]">370.60</V>
        <Unit className="w-[77px]">kms</Unit>
        <Rule className="h-[20px]" />
        <K className="ml-[33px] w-[170px] tracking-[0.008em]">Work Hour:</K>
        <V className="w-[175px] tracking-[0.004em]">13:00 Hrs</V>
        <Rule className="h-[20px]" />
        <K className="ml-[33px] w-[169px] tracking-[-0.01em]">Max speed:</K>
        <V className="w-[38px]">91</V>
        <Unit className="w-[101px]">Km/Hr</Unit>
        <Rule className="h-[20px]" />
        <K className="ml-[31px] w-[98px] tracking-[0.01em]">Alerts:</K>
        <a className="font-bold whitespace-pre text-[#0d8fe8] underline decoration-2 underline-offset-[3px] tracking-[-0.02em]"> 51</a>
      </div>

      <div className="mt-[22px] flex gap-[20px] pl-[18px]">
        {tiles.map((t) => (
          <div key={t.label} className="flex h-[134px] w-[341px] items-center rounded-[16px] bg-[#f4f8fd] pl-[22px]">
            <span className={`flex h-[83px] w-[83px] items-center justify-center rounded-full text-white ${t.bg}`}>{t.icon}</span>
            <div className="mb-[8px] ml-[15px] flex flex-col leading-[43px]">
              <span className="text-[27px] tracking-[0.016em] text-[#6c757d]">{t.label}</span>
              <span className="text-[30px] font-semibold text-[#212529]">{t.value}</span>
            </div>
          </div>
        ))}
      </div>
    </section>
  );
}

/* ---------- information menu ---------- */

function InformationMenu() {
  return (
    <aside className="flex h-[1435px] w-[500px] flex-col overflow-hidden rounded-[26px] bg-white shadow-[0_2px_5px_rgba(40,50,80,0.12)]">
      <h2 className="flex h-[111px] shrink-0 items-center pt-[9px] pl-[29px] text-[36px] font-semibold tracking-[0.016em] text-[#212529]">
        <ChevronRight className="mr-[18px] h-[46px] w-[46px] text-[#343a40]" strokeWidth={2} />
        Information
      </h2>
      {menu.map((m, i) => (
        <div
          key={m.label}
          className={`mr-[2px] flex shrink-0 items-center border-b-2 pl-[24px] text-[#65727e] ${
            i === 0 ? 'h-[113px] border-[#c9cacb] bg-[#c9cacb]' : 'h-[111px] border-[#e9ecf0]'
          }`}
        >
          <span className="mt-[9px] flex w-[54px] justify-center">{m.icon}</span>
          <span className="ml-[16px] pb-[3px] text-[27px] whitespace-nowrap tracking-[0.018em] text-[#33383d]">{m.label}</span>
        </div>
      ))}
    </aside>
  );
}

export default function App() {
  return (
    <div className="h-[1711px] w-[3041px] overflow-hidden bg-white font-[Inter,sans-serif]">
      <div className="relative mt-[2px] h-[1709px] w-[3041px] rounded-[44px] bg-[#eff0f6] pt-[34px] pl-[68px]">
        <div className="absolute top-0 left-[1345px] h-[2px] w-[355px] rounded-b-full bg-[#e8e9ee] shadow-[0_2px_4px_rgba(60,60,80,0.1)]" />
        <Header />
        <main className="mt-[35px] flex">
          <VehicleList />
          <div className="ml-[26px]">
            <VehicleDetails />
          </div>
          <div className="ml-[27px]">
            <InformationMenu />
          </div>
        </main>
      </div>
    </div>
  );
}
